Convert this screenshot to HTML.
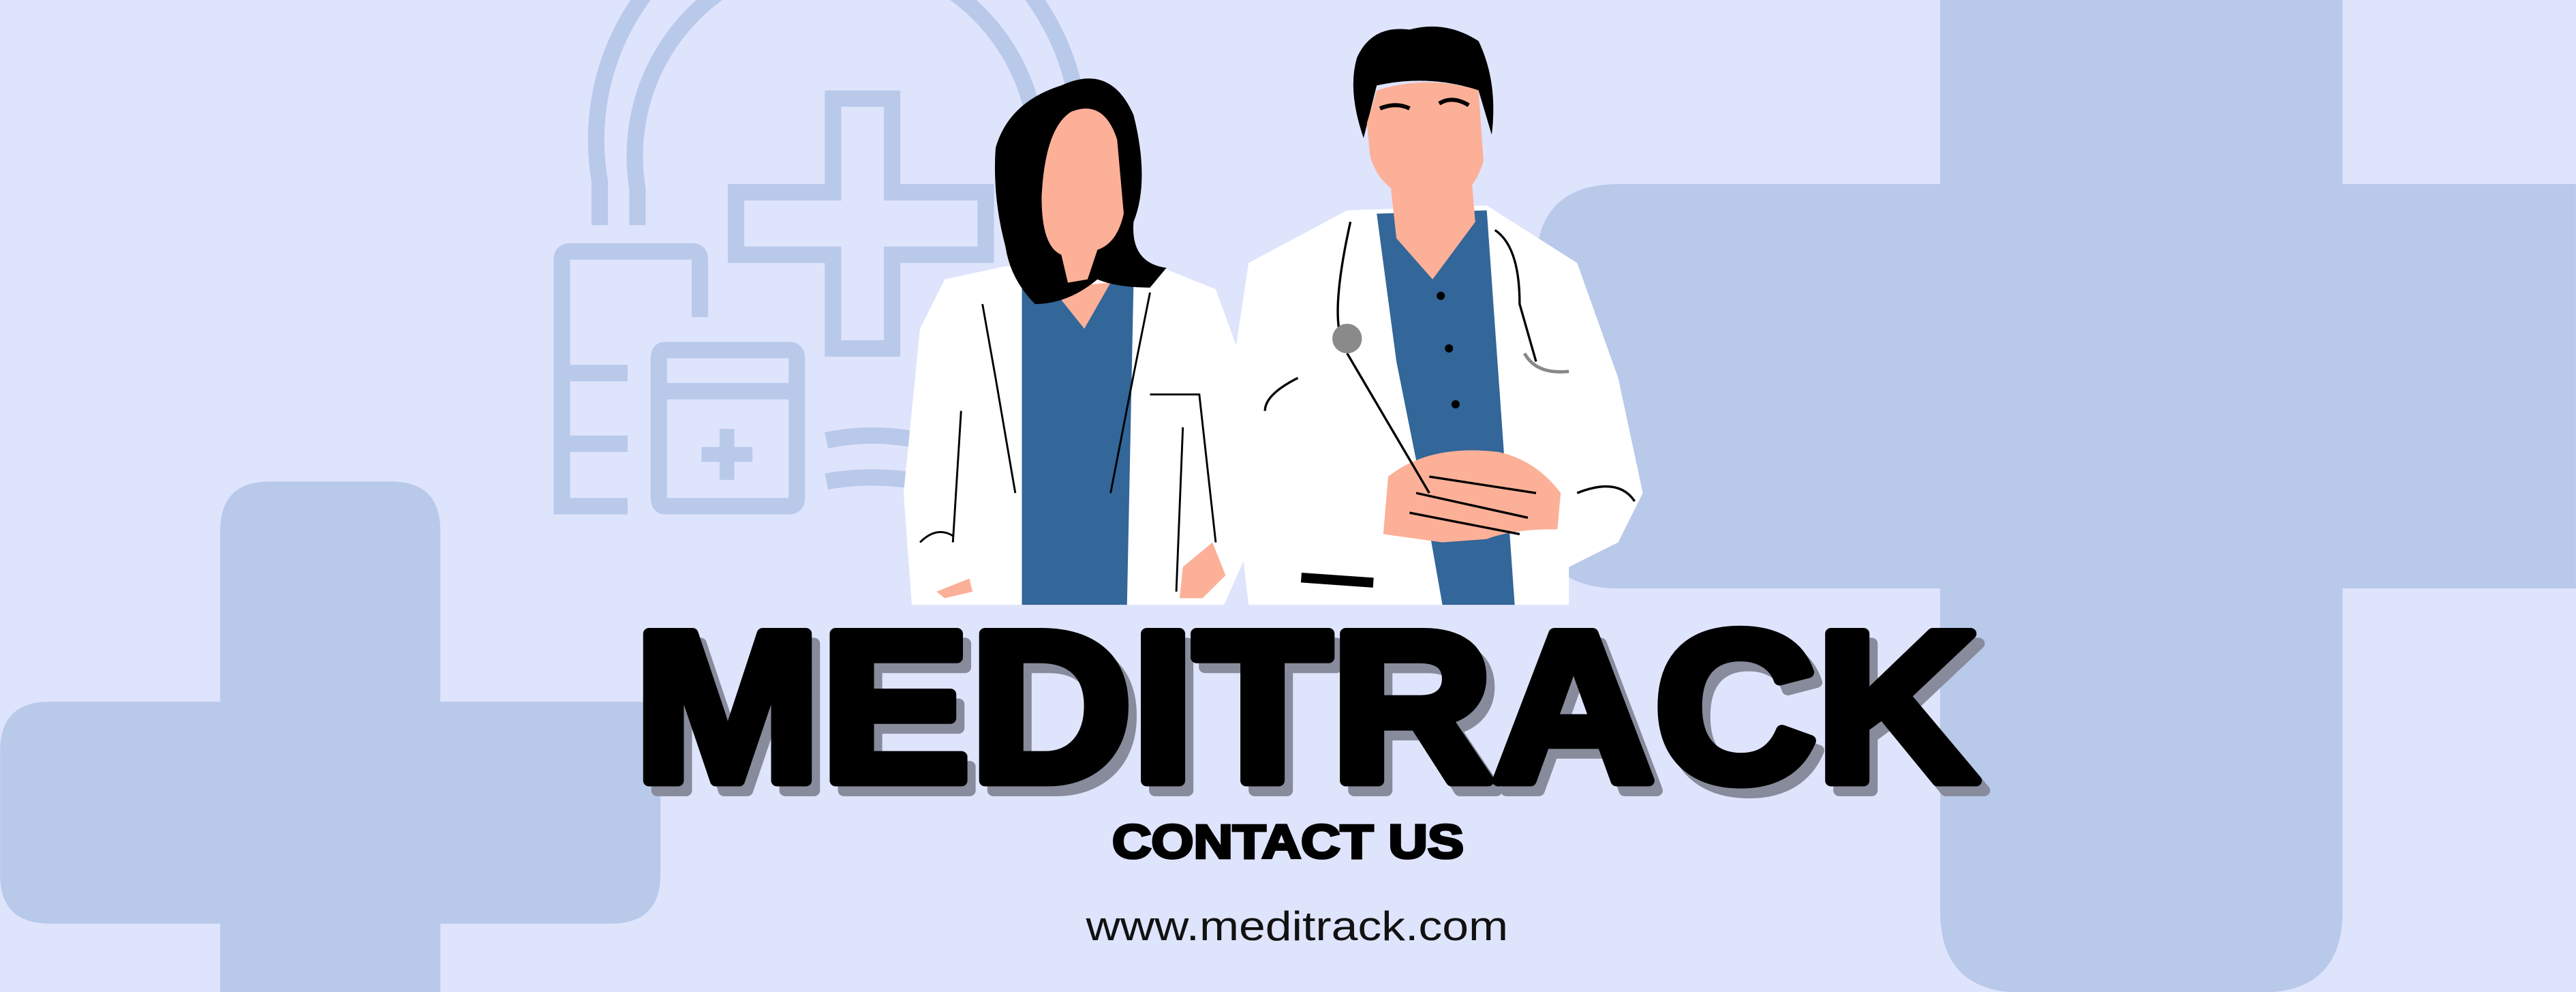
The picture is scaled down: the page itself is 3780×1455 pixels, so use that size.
<!DOCTYPE html>
<html><head><meta charset="utf-8"><style>
html,body{margin:0;padding:0;background:#dfe4fd;overflow:hidden}
svg{display:block}
</style></head><body>
<svg width="3780" height="1455" viewBox="0 0 1568 603.6" xmlns="http://www.w3.org/2000/svg">
<rect width="1568" height="604" fill="#dfe4fd"/>
<g fill="#b8c9ea">
<path d="M1181 0H1426V554Q1426 604 1376 604H1231Q1181 604 1181 554Z"/>
<path d="M985 112H1568V358H985Q935 358 935 308V162Q935 112 985 112Z"/>
<path d="M164 293H238Q268 293 268 323V604H134V323Q134 293 164 293Z"/>
<path d="M30 427H402V532Q402 562 372 562H30Q0 562 0 532V457Q0 427 30 427Z"/>
</g>
<g fill="none" stroke="#b8c9ea" stroke-width="10">
<path d="M365 137V110A145 145 0 0 1 655 60"/>
<path d="M388 137V115A122 122 0 0 1 630 75"/>
<path d="M426 193V158Q426 153 421 153H347Q342 153 342 158V308H382M382 227H342M382 270H342"/>
<path d="M405 213H480Q485 213 485 218V303Q485 308 480 308H405Q401 308 401 303V218Q401 213 405 213ZM401 238H485"/>
<path d="M507 60H543V117H600V155H543V212H507V155H448V117H507Z"/>
<path d="M503 268Q530 262 560 268M503 293Q530 288 560 293"/>
</g>
<path d="M438 261H447V272H458V281H447V292H438V281H427V272H438Z" fill="#b8c9ea"/>
<!-- woman -->
<path d="M575 170L612 162L700 160L740 176L756 220L762 330L745 368H555L550 300L560 200Z" fill="#fff"/>
<path d="M622 175L690 172L686 368H622Z" fill="#336699"/>
<path d="M640 175L660 200L676 172Z" fill="#fcb098"/>
<path d="M646 52Q676 38 690 70Q700 110 690 135Q688 160 710 163L700 175Q680 175 668 170Q650 185 630 185Q615 170 612 150Q604 120 606 90Q614 62 646 52Z" fill="#000"/>
<path d="M652 68Q672 60 680 85L684 130Q680 148 668 152L662 170L650 172L646 155Q634 150 634 120Q636 78 652 68Z" fill="#fcb098"/>
<path d="M720 345L738 330L746 350L732 364H718Z" fill="#fcb098"/>
<path d="M570 360L590 352L592 360L575 364Z" fill="#fcb098"/>
<g fill="none" stroke="#000" stroke-width="1.2">
<path d="M598 185L606 230L618 300M700 178L690 228L676 300M700 240L730 240L740 330M585 250L580 330M720 260L716 360M560 330Q570 320 580 326"/>
</g>
<!-- man -->
<path d="M760 160L820 128L905 125L960 160L985 230L1000 300L985 330L955 345L955 368H760L752 300L745 260Z" fill="#fff"/>
<path d="M838 130L905 128L922 368H878L866 300L850 220Z" fill="#336699"/>
<path d="M845 100L895 100L898 135L872 170L850 145Z" fill="#fcb098"/>
<path d="M826 35Q835 15 858 18Q880 12 900 25Q912 50 908 82L900 55Q870 45 838 52L830 84Q820 55 826 35Z" fill="#000"/>
<path d="M838 55Q870 45 900 55L903 98Q895 125 870 125Q840 118 834 95L832 75Z" fill="#fcb098"/>
<path d="M845 290Q870 270 912 275Q935 280 950 300L948 322Q920 322 905 328L878 330L842 325Z" fill="#fcb098"/>
<g fill="none" stroke="#000" stroke-width="1.4">
<path d="M822 135Q812 180 815 200M910 140Q925 150 925 185L935 220M820 215L870 300M790 230Q770 240 770 250M960 300Q985 290 995 305M870 290L935 300M862 300L930 315M858 312L925 325"/>
<path d="M840 66Q850 62 858 66M876 63Q884 58 894 64" stroke-width="2.5"/>
</g>
<circle cx="820" cy="206" r="9" fill="#8a8a8a"/>
<path d="M928 215Q935 228 955 226" stroke="#888" stroke-width="2" fill="none"/>
<rect x="792" y="350" width="44" height="6" fill="#000" transform="rotate(4 814 353)"/>
<g fill="#000"><circle cx="877" cy="180" r="2.5"/><circle cx="882" cy="212" r="2.5"/><circle cx="886" cy="246" r="2.5"/></g>
<g font-family="'Liberation Sans',sans-serif" font-weight="bold">
<text x="391" y="481" font-size="130" textLength="818" lengthAdjust="spacingAndGlyphs" fill="#878b9b" stroke="#878b9b" stroke-width="7" stroke-linejoin="round">MEDITRACK</text>
<text x="386" y="475" font-size="130" textLength="818" lengthAdjust="spacingAndGlyphs" fill="#000" stroke="#000" stroke-width="7" stroke-linejoin="round">MEDITRACK</text>
<text x="677" y="522" font-size="29" textLength="214" lengthAdjust="spacingAndGlyphs" fill="#000" stroke="#000" stroke-width="1.6">CONTACT US</text>
</g>
<text x="661" y="572" font-family="'Liberation Sans',sans-serif" font-size="25" textLength="257" lengthAdjust="spacingAndGlyphs" fill="#111">www.meditrack.com</text>
</svg>
</body></html>
